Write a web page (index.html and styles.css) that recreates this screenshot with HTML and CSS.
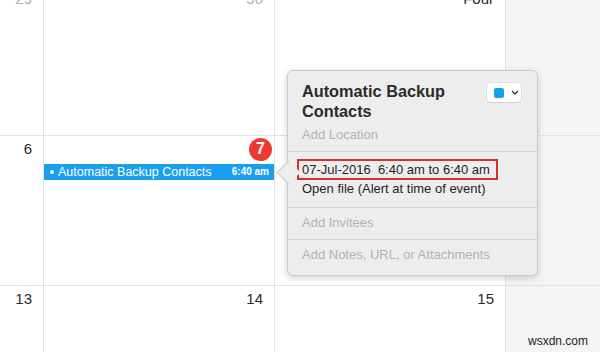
FILE: index.html
```html
<!DOCTYPE html>
<html lang="en">
<head>
    <meta charset="UTF-8">
    <title>Calendar - Event Popover</title>
    <link rel="stylesheet" href="styles.css">
</head>
<body>
    <div class="month">
        <div class="day"><div class="day-num muted">29</div></div>
        <div class="day"><div class="day-num muted">30</div></div>
        <div class="day"><div class="day-num">Four</div></div>
        <div class="day weekend"></div>

        <div class="day"><div class="day-num">6</div></div>
        <div class="day">
            <div class="day-num"><span class="today">7</span></div>
            <div class="event">
                <span class="event-dot"></span>
                <span class="event-title">Automatic Backup Contacts</span>
                <span class="event-time">6:40 am</span>
            </div>
        </div>
        <div class="day"></div>
        <div class="day weekend"></div>

        <div class="day"><div class="day-num">13</div></div>
        <div class="day"><div class="day-num">14</div></div>
        <div class="day"><div class="day-num">15</div></div>
        <div class="day weekend"></div>
    </div>

    <div class="popover">
        <div class="pop-head">
            <div class="pop-title-row">
                <div class="pop-title">Automatic Backup Contacts</div>
                <div class="color-picker">
                    <span class="color-swatch"></span>
                    <svg width="8" height="5" viewBox="0 0 8 5">
                        <path d="M1 1 L4 4 L7 1" fill="none" stroke="#333" stroke-width="1.3"/>
                    </svg>
                </div>
            </div>
            <div class="placeholder pop-location">Add Location</div>
        </div>
        <div class="pop-when">
            <span class="when-box">07-Jul-2016  6:40 am to 6:40 am</span>
            <div class="alert-line">Open file (Alert at time of event)</div>
        </div>
        <div class="pop-row placeholder">Add Invitees</div>
        <div class="pop-row pop-last placeholder">Add Notes, URL, or Attachments</div>
    </div>

    <div class="watermark">wsxdn.com</div>
</body>
</html>
```

FILE: styles.css
```css
* {
    margin: 0;
    padding: 0;
    box-sizing: border-box;
}

body {
    font-family: 'Liberation Sans', Arial, Helvetica, sans-serif;
    background: #fff;
    width: 600px;
    height: 352px;
    overflow: hidden;
    position: relative;
    color: #222;
}

/* month grid, scrolled so the first row is cut at the top */
.month {
    display: grid;
    grid-template-columns: 44px 231px 231px 1fr;
    grid-template-rows: 150px 150px 67px;
    margin-top: -15px;
}

.day {
    border-top: 1px solid #e2e2e2;
    border-right: 1px solid #e2e2e2;
}

.day.weekend {
    background: #f4f4f4;
    border-right: none;
}

.day-num {
    display: flex;
    justify-content: flex-end;
    align-items: center;
    height: 22px;
    padding: 4px 11px 0 0;
    font-size: 15px;
    line-height: 18px;
    color: #2a2a2a;
}

.day-num.muted {
    color: #b0b0b0;
}

.today {
    display: flex;
    align-items: center;
    justify-content: center;
    width: 23px;
    height: 23px;
    margin-right: -9px;
    border-radius: 50%;
    background: #ec3a31;
    color: #fff;
    font-weight: 700;
    font-size: 16px;
}

.event {
    display: flex;
    align-items: center;
    height: 16px;
    margin-top: 6px;
    padding: 0 5px 0 6px;
    background: #1a9ff0;
    color: #fff;
    font-size: 12.5px;
    line-height: 16px;
}

.event-dot {
    width: 4px;
    height: 4px;
    border-radius: 50%;
    background: #fff;
    margin-right: 4px;
}

.event-title {
    flex: 1;
}

.event-time {
    font-size: 10px;
    font-weight: 700;
}

/* popover */
.popover {
    position: absolute;
    left: 287px;
    top: 70px;
    width: 251px;
    background: #ededed;
    border: 1px solid #cacaca;
    border-radius: 6px;
    box-shadow: 0 2px 7px rgba(0, 0, 0, 0.18);
}

.popover::before {
    content: '';
    position: absolute;
    left: -8px;
    top: 93px;
    width: 16px;
    height: 16px;
    background: #ededed;
    border-left: 1px solid #cacaca;
    border-bottom: 1px solid #cacaca;
    transform: rotate(45deg);
}

.pop-head {
    padding: 10px 16px 8px 14px;
    border-bottom: 1px solid #d7d7d7;
}

.pop-title-row {
    display: flex;
    justify-content: space-between;
    align-items: flex-start;
    gap: 10px;
}

.pop-title {
    font-size: 16.3px;
    font-weight: 700;
    line-height: 20px;
    color: #2b2b2b;
}

.color-picker {
    display: flex;
    align-items: center;
    gap: 7px;
    flex-shrink: 0;
    width: 34px;
    height: 19px;
    margin-top: 2px;
    padding-left: 7px;
    background: #fff;
    border-radius: 4px;
    box-shadow: 0 0 0 1px rgba(0, 0, 0, 0.06), 0 1px 1px rgba(0, 0, 0, 0.08);
}

.color-swatch {
    width: 10px;
    height: 10px;
    border-radius: 2px;
    background: #1a9ff0;
}

.placeholder {
    color: #b3b3b3;
}

.pop-location {
    margin-top: 6px;
    font-size: 13px;
    line-height: 16px;
}

.pop-when {
    padding: 7px 14px 10px;
    border-bottom: 1px solid #d7d7d7;
    font-size: 13px;
    line-height: 16px;
}

.when-box {
    display: inline-block;
    margin-left: -5px;
    padding: 0 6px 0 3px;
    border: 2px solid #d7302b;
    line-height: 17px;
    white-space: pre;
    color: #1e1e1e;
}

.alert-line {
    margin-top: 1px;
    color: #1e1e1e;
}

.pop-row {
    padding: 7px 14px 8px;
    font-size: 13px;
    line-height: 16px;
    border-bottom: 1px solid #d7d7d7;
}

.pop-row.pop-last {
    border-bottom: none;
    padding-bottom: 12px;
}

.watermark {
    position: absolute;
    right: 12px;
    bottom: 4px;
    font-size: 12px;
    color: #222;
}
```
